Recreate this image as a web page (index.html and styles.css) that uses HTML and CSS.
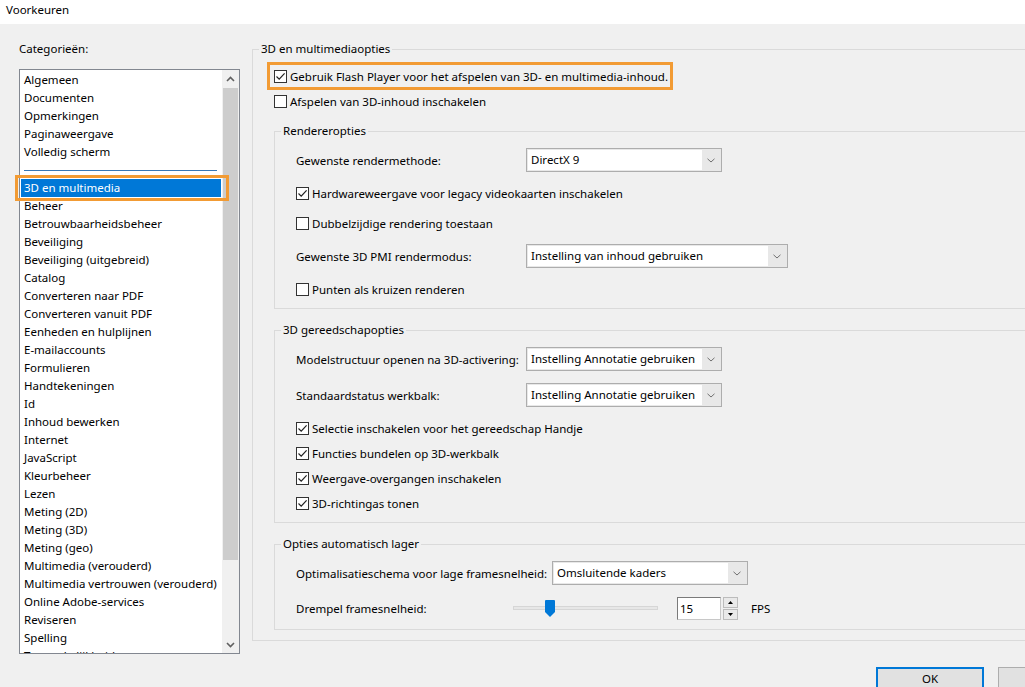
FILE: index.html
```html
<!DOCTYPE html>
<html lang="nl">
<head>
<meta charset="utf-8">
<title>Voorkeuren</title>
<link rel="stylesheet" href="styles.css">
</head>
<body>
<div class="dialog">
  <div class="titlebar">Voorkeuren</div>
  <div class="content">
    <div class="categories">
      <div class="cat-label">Categorieën:</div>
      <div class="listbox">
        <ul class="items">
          <li>Algemeen</li>
          <li>Documenten</li>
          <li>Opmerkingen</li>
          <li>Paginaweergave</li>
          <li>Volledig scherm</li>
          <li class="sep"></li>
          <li class="sel">3D en multimedia</li>
          <li>Beheer</li>
          <li>Betrouwbaarheidsbeheer</li>
          <li>Beveiliging</li>
          <li>Beveiliging (uitgebreid)</li>
          <li>Catalog</li>
          <li>Converteren naar PDF</li>
          <li>Converteren vanuit PDF</li>
          <li>Eenheden en hulplijnen</li>
          <li>E-mailaccounts</li>
          <li>Formulieren</li>
          <li>Handtekeningen</li>
          <li>Id</li>
          <li>Inhoud bewerken</li>
          <li>Internet</li>
          <li>JavaScript</li>
          <li>Kleurbeheer</li>
          <li>Lezen</li>
          <li>Meting (2D)</li>
          <li>Meting (3D)</li>
          <li>Meting (geo)</li>
          <li>Multimedia (verouderd)</li>
          <li>Multimedia vertrouwen (verouderd)</li>
          <li>Online Adobe-services</li>
          <li>Reviseren</li>
          <li>Spelling</li>
          <li>Toegankelijkheid</li>
        </ul>
        <div class="scrollbar">
          <div class="sarrow"><svg width="9" height="6" viewBox="0 0 9 6"><path d="M1 5 L4.5 1.5 L8 5" fill="none" stroke="#606060" stroke-width="1.6"/></svg></div>
          <div class="track"><div class="thumb"></div></div>
          <div class="sarrow"><svg width="9" height="6" viewBox="0 0 9 6"><path d="M1 1 L4.5 4.5 L8 1" fill="none" stroke="#606060" stroke-width="1.6"/></svg></div>
        </div>
      </div>
      <div class="cat-highlight"></div>
    </div>

    <div class="panel">
      <fieldset class="group outer">
        <legend>3D en multimediaopties</legend>
        <div class="flash">
          <div class="check-row">
            <span class="cb"><svg width="11" height="11" viewBox="0 0 11 11"><path d="M1.5 5.5 L4.2 8.2 L9.6 2.3" fill="none" stroke="#222" stroke-width="1.2"/></svg></span>
            <span>Gebruik Flash Player voor het afspelen van 3D- en multimedia-inhoud.</span>
          </div>
        </div>
        <div class="check-row top-row">
          <span class="cb"></span>
          <span>Afspelen van 3D-inhoud inschakelen</span>
        </div>

        <fieldset class="group inner">
          <legend>Rendereropties</legend>
          <div class="gbody">
            <div class="frow">
              <span class="lbl">Gewenste rendermethode:</span>
              <div class="combo"><span class="val">DirectX 9</span><span class="arr"><svg width="8" height="5" viewBox="0 0 8 5"><path d="M0.5 0.8 L4 4 L7.5 0.8" fill="none" stroke="#707070" stroke-width="1"/></svg></span></div>
            </div>
            <div class="check-row">
              <span class="cb"><svg width="11" height="11" viewBox="0 0 11 11"><path d="M1.5 5.5 L4.2 8.2 L9.6 2.3" fill="none" stroke="#222" stroke-width="1.2"/></svg></span>
              <span>Hardwareweergave voor legacy videokaarten inschakelen</span>
            </div>
            <div class="check-row">
              <span class="cb"></span>
              <span>Dubbelzijdige rendering toestaan</span>
            </div>
            <div class="frow">
              <span class="lbl">Gewenste 3D PMI rendermodus:</span>
              <div class="combo wide"><span class="val">Instelling van inhoud gebruiken</span><span class="arr"><svg width="8" height="5" viewBox="0 0 8 5"><path d="M0.5 0.8 L4 4 L7.5 0.8" fill="none" stroke="#707070" stroke-width="1"/></svg></span></div>
            </div>
            <div class="check-row">
              <span class="cb"></span>
              <span>Punten als kruizen renderen</span>
            </div>
          </div>
        </fieldset>

        <fieldset class="group inner">
          <legend>3D gereedschapopties</legend>
          <div class="gbody">
            <div class="frow">
              <span class="lbl">Modelstructuur openen na 3D-activering:</span>
              <div class="combo"><span class="val">Instelling Annotatie gebruiken</span><span class="arr"><svg width="8" height="5" viewBox="0 0 8 5"><path d="M0.5 0.8 L4 4 L7.5 0.8" fill="none" stroke="#707070" stroke-width="1"/></svg></span></div>
            </div>
            <div class="frow">
              <span class="lbl">Standaardstatus werkbalk:</span>
              <div class="combo"><span class="val">Instelling Annotatie gebruiken</span><span class="arr"><svg width="8" height="5" viewBox="0 0 8 5"><path d="M0.5 0.8 L4 4 L7.5 0.8" fill="none" stroke="#707070" stroke-width="1"/></svg></span></div>
            </div>
            <div class="checks">
              <div class="check-row">
                <span class="cb"><svg width="11" height="11" viewBox="0 0 11 11"><path d="M1.5 5.5 L4.2 8.2 L9.6 2.3" fill="none" stroke="#222" stroke-width="1.2"/></svg></span>
                <span>Selectie inschakelen voor het gereedschap Handje</span>
              </div>
              <div class="check-row">
                <span class="cb"><svg width="11" height="11" viewBox="0 0 11 11"><path d="M1.5 5.5 L4.2 8.2 L9.6 2.3" fill="none" stroke="#222" stroke-width="1.2"/></svg></span>
                <span>Functies bundelen op 3D-werkbalk</span>
              </div>
              <div class="check-row">
                <span class="cb"><svg width="11" height="11" viewBox="0 0 11 11"><path d="M1.5 5.5 L4.2 8.2 L9.6 2.3" fill="none" stroke="#222" stroke-width="1.2"/></svg></span>
                <span>Weergave-overgangen inschakelen</span>
              </div>
              <div class="check-row">
                <span class="cb"><svg width="11" height="11" viewBox="0 0 11 11"><path d="M1.5 5.5 L4.2 8.2 L9.6 2.3" fill="none" stroke="#222" stroke-width="1.2"/></svg></span>
                <span>3D-richtingas tonen</span>
              </div>
            </div>
          </div>
        </fieldset>

        <fieldset class="group inner">
          <legend>Opties automatisch lager</legend>
          <div class="gbody g3">
            <div class="frow">
              <span class="lbl lbl-opt">Optimalisatieschema voor lage framesnelheid:</span>
              <div class="combo"><span class="val">Omsluitende kaders</span><span class="arr"><svg width="8" height="5" viewBox="0 0 8 5"><path d="M0.5 0.8 L4 4 L7.5 0.8" fill="none" stroke="#707070" stroke-width="1"/></svg></span></div>
            </div>
            <div class="frow">
              <span class="lbl lbl-fps">Drempel framesnelheid:</span>
              <div class="slider">
                <div class="strack"></div>
                <svg class="sthumb" width="10" height="17" viewBox="0 0 10 17"><path d="M0 1 Q0 0 1 0 H9 Q10 0 10 1 V12 L5 17 L0 12 Z" fill="#0078d7"/></svg>
              </div>
              <div class="num">15</div>
              <div class="spin">
                <div class="sb"><svg width="5" height="3" viewBox="0 0 5 3"><path d="M0 3 L2.5 0 L5 3 Z" fill="#000"/></svg></div>
                <div class="sb"><svg width="5" height="3" viewBox="0 0 5 3"><path d="M0 0 L2.5 3 L5 0 Z" fill="#000"/></svg></div>
              </div>
              <span class="fps">FPS</span>
            </div>
          </div>
        </fieldset>
      </fieldset>
    </div>
  </div>
  <div class="buttons">
    <div class="btn default">OK</div>
    <div class="btn">Annuleren</div>
  </div>
</div>
</body>
</html>
```

FILE: styles.css
```css
html, body {
  margin: 0;
  height: 100%;
  overflow: hidden;
}
body {
  background: #f0f0f0;
  font-family: "Noto Sans", "Open Sans", sans-serif;
  font-size: 11.5px;
  color: #000;
}
.dialog {
  width: 1140px;
}
.titlebar {
  height: 24px;
  background: #fff;
  padding-left: 6px;
  line-height: 20px;
}
.content {
  display: flex;
  align-items: flex-start;
  padding: 17px 0 0 19px;
}

/* Categories list */
.categories {
  position: relative;
  width: 221px;
  flex: none;
}
.cat-label {
  line-height: 16px;
}
.listbox {
  margin-top: 12px;
  height: 585px;
  box-sizing: border-box;
  border: 1px solid #828790;
  background: #fff;
  display: flex;
}
.items {
  flex: 1;
  list-style: none;
  margin: 0;
  padding: 1px 1px 0;
  overflow: hidden;
}
.items li {
  height: 18px;
  line-height: 18px;
  padding-left: 3px;
  white-space: nowrap;
}
.items li.sep {
  display: flex;
  align-items: center;
  padding: 0 4px 0 3px;
}
.items li.sep::before {
  content: "";
  flex: 1;
  height: 1px;
  background: #3a78b4;
}
.items li.sel {
  background: #0078d7;
  color: #fff;
}
.scrollbar {
  width: 17px;
  flex: none;
  display: flex;
  flex-direction: column;
  background: #f0f0f0;
}
.sarrow {
  height: 17px;
  display: flex;
  align-items: center;
  justify-content: center;
}
.track {
  flex: 1;
  padding: 1px 1px 0;
}
.thumb {
  height: 472px;
  background: #cdcdcd;
}
.cat-highlight {
  position: absolute;
  left: -4px;
  top: 134px;
  width: 214px;
  height: 26px;
  box-sizing: border-box;
  border: 3px solid #f29b34;
}

/* Right panel */
.panel {
  flex: 1;
  margin-left: 12px;
  margin-right: 20px;
}
fieldset.group {
  margin: 0;
  padding: 0;
  min-width: 0;
  border: 1px solid #dadada;
}
fieldset.group > legend {
  padding: 0 2px;
  margin-left: 6px;
  line-height: 16px;
}
fieldset.outer {
  padding-bottom: 10px;
}
.flash {
  width: fit-content;
  margin: 5px 0 0 14px;
  border: 3px solid #f29b34;
  padding: 0 2px 0 4px;
}
.flash .check-row {
  height: 22px;
}
.check-row {
  display: flex;
  align-items: center;
  gap: 3px;
  height: 20px;
  white-space: nowrap;
}
.top-row {
  margin: 1px 0 0 21px;
}
.cb {
  width: 13px;
  height: 13px;
  box-sizing: border-box;
  border: 1px solid #333;
  background: #fff;
  flex: none;
  display: flex;
  align-items: center;
  justify-content: center;
}
fieldset.inner {
  margin: 12px 20px 0 21px;
}
fieldset.inner + fieldset.inner {
  margin-top: 13px;
}
.gbody {
  display: flex;
  flex-direction: column;
  gap: 10px;
  padding: 8px 0 9px 21px;
}
.checks {
  display: flex;
  flex-direction: column;
  gap: 5px;
}
.frow {
  display: flex;
  align-items: center;
  height: 24px;
  margin: 1px 0;
  white-space: nowrap;
}
.lbl {
  width: 230px;
  flex: none;
}
.lbl-opt {
  width: 256px;
}
.lbl-fps {
  width: 217px;
}
.gbody.g3 {
  gap: 11px;
  padding-top: 9px;
}
.g3 .frow {
  margin: 0;
}

/* Combo box */
.combo {
  width: 196px;
  height: 24px;
  box-sizing: border-box;
  border: 1px solid #adadad;
  background: #e8e8e8;
  padding: 1px;
  display: flex;
  flex: none;
}
.combo.wide {
  width: 262px;
}
.combo .val {
  flex: 1;
  background: #fff;
  padding-left: 3px;
  line-height: 20px;
  overflow: hidden;
}
.combo .arr {
  width: 18px;
  display: flex;
  align-items: center;
  justify-content: center;
}

/* Slider and spin */
.slider {
  position: relative;
  width: 145px;
  height: 24px;
  display: flex;
  align-items: center;
  flex: none;
}
.strack {
  flex: 1;
  height: 2px;
  background: #e7e7e7;
  border: 1px solid #d6d6d6;
}
.sthumb {
  position: absolute;
  left: 32px;
  top: 4px;
}
.num {
  margin-left: 19px;
  width: 44px;
  height: 23px;
  box-sizing: border-box;
  background: #fff;
  border: 1px solid #c8c8c8;
  border-top-color: #7a7a7a;
  border-left-color: #7a7a7a;
  padding-left: 2px;
  line-height: 21px;
}
.spin {
  margin-left: 2px;
  width: 15px;
  height: 23px;
  display: flex;
  flex-direction: column;
  gap: 1px;
}
.sb {
  flex: 1;
  border: 1px solid #bcbcbc;
  background: #e9e9e9;
  display: flex;
  align-items: center;
  justify-content: center;
}
.fps {
  margin-left: 13px;
}

/* Buttons */
.buttons {
  display: flex;
  justify-content: flex-end;
  gap: 14px;
  padding-right: 24px;
  margin-top: 13px;
}
.btn {
  width: 108px;
  height: 23px;
  box-sizing: border-box;
  background: #e1e1e1;
  border: 1px solid #adadad;
  text-align: center;
  line-height: 21px;
}
.btn.default {
  border: 2px solid #0078d7;
  line-height: 19px;
}
.btn + .btn {
  width: 118px;
}
```
